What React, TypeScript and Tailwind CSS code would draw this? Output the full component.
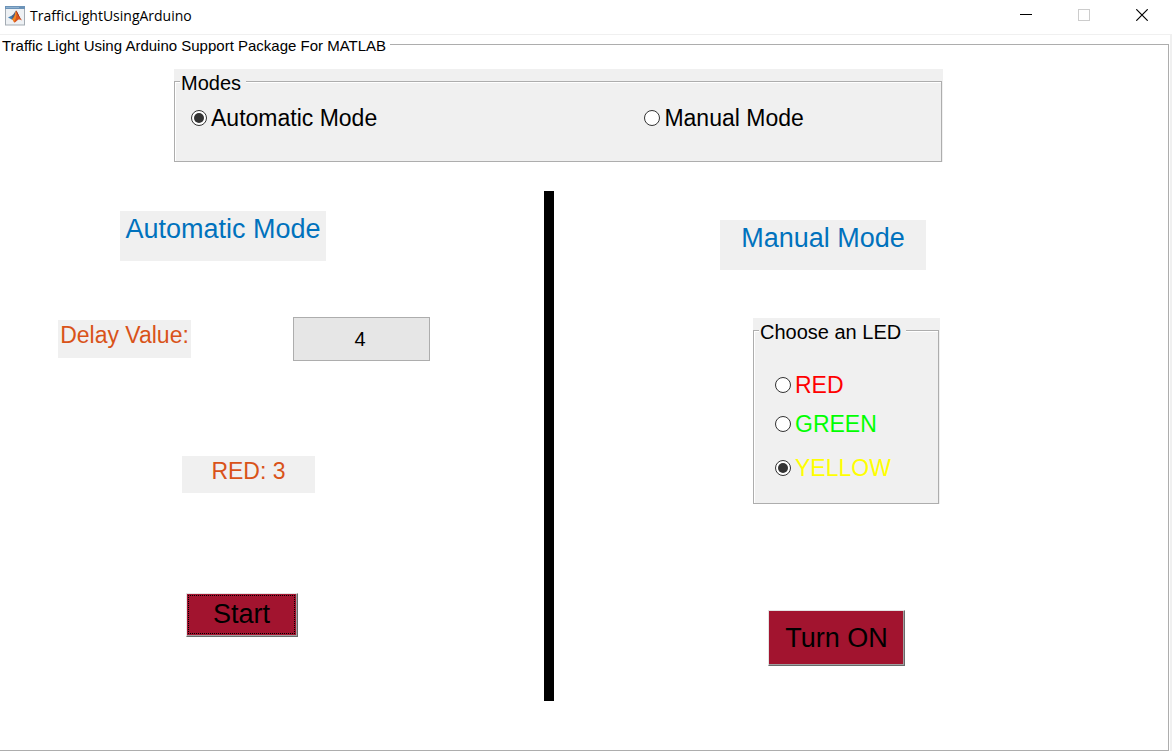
import { useState } from "react";
import type { ReactNode } from "react";

const radioClass =
  "relative m-0 h-4 w-4 shrink-0 appearance-none rounded-full border border-[#333] bg-white before:absolute before:inset-0.5 before:rounded-full checked:before:bg-[#333]";

function MatlabIcon() {
  return (
    <svg width="20" height="20" viewBox="0 0 20 20" aria-hidden="true">
      <rect x="0.5" y="0.5" width="19" height="18.5" fill="#eef1f4" stroke="#a3abb3" />
      <rect x="0" y="0" width="20" height="3" fill="#6c93b8" />
      <rect x="1" y="1" width="13" height="1" fill="#8fb2d0" />
      <path d="M3 11.5 L7 9.4 L9 10.5 L6.8 13.6 Z" fill="#3f7fb5" />
      <path d="M7 9.4 C8.8 9 9.6 6 11 4.6 L9.8 11 L6.8 13.6 Z" fill="#4a5f86" />
      <path d="M11 4.6 C12.6 5.6 14 11 17 14.6 C14.5 12.6 13 13.4 11.6 15 C10.8 16 9.6 16.8 9 16.2 C8.4 14.6 7.6 13.8 6.8 13.6 C9 12.5 10.2 9 11 4.6 Z" fill="#d9531e" />
      <path d="M11 4.6 C11.9 8 11.7 12 9 16.2 C8.4 14.6 7.6 13.8 6.8 13.6 C9 12.5 10.2 9 11 4.6 Z" fill="#f08a24" />
      <path d="M11 4.6 C12.6 5.6 14 11 17 14.6 C14 11.6 12.6 9 11 4.6 Z" fill="#8c2417" />
    </svg>
  );
}

function TitleBar() {
  const control = "flex h-[30px] w-[58px] items-center justify-center";
  return (
    <header className="flex h-[35px] items-start justify-between border-b border-[#f0f0f0] pr-px">
      <div className="flex h-[31px] items-center gap-[5px] pl-[5px] font-['Open_Sans',sans-serif] text-sm">
        <MatlabIcon />
        <h1>TrafficLightUsingArduino</h1>
      </div>
      <div className="flex">
        <button type="button" aria-label="Minimize" className={control}>
          <svg width="12" height="12" viewBox="0 0 12 12" shapeRendering="crispEdges">
            <rect y="5" width="12" height="1" fill="#000" />
          </svg>
        </button>
        <button type="button" aria-label="Maximize" disabled className={control}>
          <svg width="12" height="12" viewBox="0 0 12 12">
            <rect x="0.5" y="0.5" width="11" height="11" fill="none" stroke="#ccc" />
          </svg>
        </button>
        <button type="button" aria-label="Close" className={control}>
          <svg width="12" height="12" viewBox="0 0 12 12">
            <path d="M0.3 0.3 L11.7 11.7 M11.7 0.3 L0.3 11.7" stroke="#000" strokeWidth="1.2" />
          </svg>
        </button>
      </div>
    </header>
  );
}

function Panel({ title, className, children }: { title: string; className: string; children: ReactNode }) {
  return (
    <div className={`bg-[#f0f0f0] pr-px ${className}`}>
      <fieldset className="h-full min-w-0 border border-[#adadad] shadow-[inset_1px_1px_0_#fff]">
        <legend className="ml-[5px] bg-[#f0f0f0] pt-1 pr-[5px] pl-px text-xl leading-5">{title}</legend>
        {children}
      </fieldset>
    </div>
  );
}

function Heading({ children, className }: { children: ReactNode; className: string }) {
  return (
    <h2 className={`h-[50px] w-[206px] bg-[#f0f0f0] text-center text-[27px] leading-9 whitespace-nowrap text-[#0072bd] ${className}`}>
      {children}
    </h2>
  );
}

const buttonClass =
  "border border-t-[#e3e3e3] border-r-[#696969] border-b-[#696969] border-l-[#e3e3e3] bg-[#a2142f] text-[27px] shadow-[inset_-1px_-1px_0_#a0a0a0]";

const leds = [
  { name: "RED", color: "text-[#ff0000]" },
  { name: "GREEN", color: "text-[#00ff00]" },
  { name: "YELLOW", color: "text-[#ffff00]" },
];

export default function App() {
  const [mode, setMode] = useState("Automatic Mode");
  const [led, setLed] = useState("YELLOW");
  const [delay, setDelay] = useState("4");

  return (
    <div className="flex min-h-screen flex-col bg-white font-['Liberation_Sans',Arial,sans-serif] text-black">
      <TitleBar />
      <main className="flex flex-1 flex-col border-r-2 border-[#f0f0f0] pr-px">
        <fieldset className="min-w-0 flex-1 border-r border-b border-t border-[#adadad]">
          <legend className="pt-[3px] pr-1 pl-[2px] text-[15px] leading-4">
            Traffic Light Using Arduino Support Package For MATLAB
          </legend>

          <div className="grid grid-cols-[174fr_769fr_225fr] pt-[15px]">
            <Panel title="Modes" className="col-start-2 h-[93px]">
              <div className="grid grid-cols-[454fr_297fr] pt-[11px] pl-4 text-[23px] leading-7">
                {["Automatic Mode", "Manual Mode"].map((name) => (
                  <label key={name} className="flex items-center gap-1">
                    <input
                      type="radio"
                      name="mode"
                      className={radioClass}
                      checked={mode === name}
                      onChange={() => setMode(name)}
                    />
                    {name}
                  </label>
                ))}
              </div>
            </Panel>
          </div>

          <div className="mt-[29px] grid grid-cols-[544fr_10px_614fr]">
            <section className="flex flex-col items-start pt-5">
              <Heading className="ml-[120px]">Automatic Mode</Heading>
              <div className="mt-14 ml-[58px] flex items-center gap-[102px]">
                <label
                  htmlFor="delay"
                  className="h-[38px] w-[133px] bg-[#f0f0f0] text-center text-[23px] leading-[30px] whitespace-nowrap text-[#d95319]"
                >
                  Delay Value:
                </label>
                <input
                  id="delay"
                  type="text"
                  value={delay}
                  onChange={(e) => setDelay(e.target.value)}
                  className="h-11 w-[137px] border border-[#adadad] bg-[#e6e6e6] pr-[3px] text-center text-xl"
                />
              </div>
              <output className="mt-[95px] ml-[182px] h-[37px] w-[133px] bg-[#f0f0f0] text-center text-[23px] leading-[30px] text-[#d95319]">
                RED: 3
              </output>
              <button type="button" className={`mt-[100px] ml-[186px] h-11 w-28 pt-px pr-0.5 pb-0.5 pl-px ${buttonClass}`}>
                <span className="flex h-full items-center justify-center border border-dotted border-black">
                  Start
                </span>
              </button>
            </section>

            <div className="min-h-[510px] bg-black" />

            <section className="flex flex-col items-start pt-[29px]">
              <Heading className="ml-[166px]">Manual Mode</Heading>
              <Panel title="Choose an LED" className="mt-12 ml-[199px] h-[186px] w-[187px]">
                <div className="grid grid-rows-[38px_40px_48px] pt-6 pl-[21px] text-[23px]">
                  {leds.map(({ name, color }) => (
                    <label key={name} className={`flex items-center gap-1 ${color}`}>
                      <input
                        type="radio"
                        name="led"
                        className={radioClass}
                        checked={led === name}
                        onChange={() => setLed(name)}
                      />
                      {name}
                    </label>
                  ))}
                </div>
              </Panel>
              <button type="button" className={`mt-[106px] ml-[214px] h-14 w-[137px] ${buttonClass}`}>
                Turn ON
              </button>
            </section>
          </div>
        </fieldset>
      </main>
    </div>
  );
}
